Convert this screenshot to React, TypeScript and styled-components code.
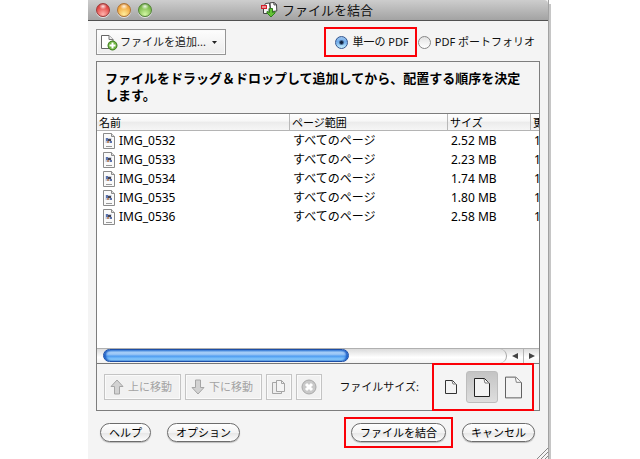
import React, { useState } from "react";
import styled, { createGlobalStyle, css } from "styled-components";

const GlobalStyle = createGlobalStyle`
  * { box-sizing: border-box; }
  body { margin: 0; background: #fff; }
  body, button, input { font-family: "Noto Sans", "Noto Sans CJK JP", sans-serif; }
`;

const Stage = styled.div`
  min-height: 100vh;
  padding: 0 89px 0 88px;
  display: flex;
`;

const Dialog = styled.main`
  position: relative;
  flex: 1;
  min-width: 0;
  display: flex;
  flex-direction: column;
  margin-right: 2px;
  border-right: 1px solid #a2a2a2;
  background: #f4f4f4;
  color: #111;
  font-size: 11px;
  line-height: 16px;
  &::after {
    content: "";
    position: absolute;
    top: 4px;
    bottom: 0;
    right: -3px;
    width: 2px;
    background: #c6c6c6;
  }
`;

const TitleBar = styled.header`
  position: relative;
  display: flex;
  align-items: center;
  justify-content: center;
  height: 21px;
  background: linear-gradient(#cdcdcd, #a3a3a3);
  border-bottom: 1px solid #515151;
  border-top-right-radius: 4px;
`;

const Lights = styled.div`
  position: absolute;
  left: 8px;
  top: 3px;
  display: flex;
  gap: 7px;
`;

const Light = styled.button<{ $top: string; $mid: string; $glow: string }>`
  width: 14px;
  height: 14px;
  padding: 0;
  border: 1px solid ${(p) => p.$top};
  border-radius: 50%;
  background:
    radial-gradient(ellipse 4px 3px at 50% 20%, #fffd, #fff0),
    radial-gradient(circle at 50% 85%, ${(p) => p.$glow}, ${(p) => p.$mid} 70%, ${(p) => p.$top});
  box-shadow: 0 1px 0 #e2e2e2;
`;

const Title = styled.h1`
  display: flex;
  align-items: center;
  gap: 4px;
  margin: 0;
  padding-right: 2px;
  font-size: 13px;
  line-height: 20px;
  font-weight: 400;
`;

const TopRow = styled.div`
  display: flex;
  align-items: center;
  justify-content: space-between;
  padding: 8px 13px 6px 8px;
`;

const SquareButton = styled.button`
  display: flex;
  align-items: center;
  gap: 4px;
  height: 26px;
  padding: 0 8px 0 5px;
  border: 1px solid #959595;
  background: linear-gradient(#fdfdfd, #ececec);
  box-shadow: inset 0 0 0 1px #fafafa;
  color: #222;
  font-size: 11px;
  line-height: 16px;
  white-space: nowrap;
  &:disabled {
    border-color: #c4c4c4;
    background: #f1f1f1;
    color: #a3a3a3;
  }
`;

const AddButton = styled(SquareButton)`
  gap: 2px;
  padding: 0 8px 0 4px;
`;

const AddLabel = styled.span`
  padding-right: 4px;
`;

const IconButton = styled(SquareButton)`
  justify-content: center;
  width: 26px;
  padding: 0;
`;

const highlight = css`
  outline: 2px solid #fb0007;
`;

const RadioGroup = styled.div`
  display: flex;
  gap: 3px;
`;

const RadioLabel = styled.label<{ $marked?: boolean }>`
  display: flex;
  align-items: center;
  gap: 4px;
  height: 26px;
  white-space: nowrap;
  ${(p) => p.$marked && css`padding: 0 6px 0 9px; ${highlight}`}
`;

const Radio = styled.input`
  appearance: none;
  width: 13px;
  height: 13px;
  margin: 0;
  border: 1px solid #868686;
  border-radius: 50%;
  background: linear-gradient(#e2e2e2, #fff);
  &:checked {
    border-color: #33568f;
    background:
      radial-gradient(circle at 50% 50%, #10233f 1px, #10233f00 3px),
      linear-gradient(#9cc4ee, #6fabea 45%, #c8f2ff);
  }
`;

const Panel = styled.section`
  flex: 1;
  display: flex;
  flex-direction: column;
  margin: 0 8px;
  border: 1px solid #7d7d7d;
`;

const Lead = styled.h2`
  margin: 0;
  padding: 8px 8px 9px;
  border-bottom: 1px solid #7d7d7d;
  font-size: 13px;
  line-height: 17px;
  font-weight: 700;
  color: #000;
`;

const TableArea = styled.div`
  flex: 1;
  min-height: 234px;
  overflow: hidden;
  background: #fff;
`;

const FileTable = styled.table`
  width: 560px;
  table-layout: fixed;
  border-collapse: separate;
  border-spacing: 0;
  color: #000;
`;

const Th = styled.th<{ $width?: number }>`
  width: ${(p) => (p.$width ? `${p.$width}px` : "auto")};
  height: 17px;
  padding: 0 2px;
  border-right: 1px solid #b8b8b8;
  border-bottom: 1px solid #b4b4b4;
  background: linear-gradient(#fff, #f7f7f7 45%, #ebebeb 50%, #f6f6f6);
  font-size: 11px;
  line-height: 15px;
  font-weight: 400;
  text-align: left;
`;

const Td = styled.td`
  height: 19px;
  padding: 0 3px;
  font-size: 12px;
  line-height: 19px;
  white-space: nowrap;
`;

const FileName = styled.div`
  display: flex;
  align-items: center;
  gap: 4px;
  padding-left: 3px;
`;

const ScrollBar = styled.div`
  display: flex;
  height: 16px;
  border-top: 1px solid #b0b0b0;
  border-bottom: 1px solid #777;
  background: linear-gradient(#dcdcdc, #fff 60%, #f2f2f2);
`;

const Track = styled.div`
  flex: 1;
  padding-left: 6px;
  border-right: 1px solid #a5a5a5;
  border-radius: 0 8px 8px 0;
`;

const Thumb = styled.div`
  width: 61%;
  height: 13px;
  border: 1px solid #1c4ea6;
  border-radius: 7px;
  background: linear-gradient(#5f9eea, #a9d0f8 25%, #8abdf5 45%, #4d9bf0 55%, #7fc3fb 80%, #a3defd);
  box-shadow: inset 2px 0 2px #1d5fc6, inset -2px 0 2px #1d5fc6;
`;

const ScrollArrow = styled.button`
  display: flex;
  align-items: center;
  justify-content: center;
  width: 16px;
  padding: 0;
  border: 0;
  background: none;
  color: #444;
  & + & { border-left: 1px solid #b5b5b5; }
`;

const ActionBar = styled.div`
  display: flex;
  align-items: center;
  justify-content: space-between;
  height: 46px;
  padding: 0 7px;
`;

const Group = styled.div`
  display: flex;
  align-items: center;
  gap: 4px;
`;

const SizeGroup = styled(Group)`
  gap: 15px;
`;

const SizeChoices = styled.div`
  display: flex;
  align-items: center;
  gap: 6px;
  height: 44px;
  padding: 0 9px 0 7px;
  ${highlight}
`;

const SizeButton = styled.button<{ $selected: boolean; $narrow?: boolean }>`
  display: flex;
  align-items: center;
  justify-content: center;
  width: ${(p) => (p.$narrow ? 19 : 32)}px;
  height: 32px;
  padding: 0;
  border: 1px solid ${(p) => (p.$selected ? "#bdbdbd" : "transparent")};
  border-radius: 3px;
  background: ${(p) => (p.$selected ? "linear-gradient(#c4c4c4, #dedede)" : "none")};
`;

const Footer = styled.footer`
  display: flex;
  align-items: center;
  justify-content: space-between;
  padding: 8px 13px 13px 12px;
`;

const FooterGroup = styled.div<{ $gap: number }>`
  display: flex;
  align-items: center;
  gap: ${(p) => p.$gap}px;
`;

const Marked = styled.div`
  display: flex;
  padding: 4px 5px;
  ${highlight}
`;

const PillButton = styled.button`
  height: 19px;
  padding: 0 8px;
  border: 1px solid #6c6c6c;
  border-radius: 10px;
  background: linear-gradient(#fff, #f3f3f3 50%, #e6e6e6 52%, #fdfdfd);
  box-shadow: 0 1px 1px #bbb;
  color: #000;
  font-size: 11px;
  line-height: 16px;
  white-space: nowrap;
`;

const Grip = styled.svg`
  position: absolute;
  right: 0;
  bottom: 0;
`;

const AppIcon = () => (
  <svg width="17" height="16" viewBox="0 0 17 16" aria-hidden="true">
    <path d="M3.500 3.500l1-2 4-.5 1 8-5 .5z" fill="#fff" stroke="#444" />
    <path d="M9 .8l4-.3 2.500 2 .3 6.500-6 .5z" fill="#fff" stroke="#444" />
    <path d="M12.800.8l.2 2.200 2.500-.3" fill="none" stroke="#444" />
    <path d="M2.500 7v4.500h5.500v-5" fill="#f4f4f4" stroke="#444" />
    <rect x="0" y="3" width="6" height="4" fill="#d3202b" />
    <path d="M1 5h4" stroke="#fff" />
    <path d="M8.500 6.500h3v4l2.500-1v1.500l-4 4-4-4V9.500l2.500 1z" fill="#63c234" stroke="#2f7d1b" />
  </svg>
);

const AddIcon = () => (
  <svg width="17" height="17" viewBox="0 0 17 17" aria-hidden="true">
    <path d="M.5 1.500h7.500l4 4V14.500H.5z" fill="#fff" stroke="#666" />
    <path d="M8 1.500v4h4" fill="#eee" stroke="#777" />
    <circle cx="11.500" cy="11.500" r="4.500" fill="#6fb540" stroke="#3b7b1c" />
    <path d="M11.500 8.500v6M8.500 11.500h6" stroke="#fff" strokeWidth="2" />
  </svg>
);

const JpegIcon = () => (
  <svg width="12" height="16" viewBox="0 0 12 16" aria-hidden="true">
    <path d="M.5.5h8l3 3v12H.5z" fill="#fafafa" stroke="#8b8b8b" />
    <path d="M8.500.5v3h3" fill="#ddd" stroke="#8b8b8b" />
    <path d="M2.500 5h6v5h-6z" fill="#bcc6da" />
    <path d="M3 5h2v3H3zM7 8h2v2H7z" fill="#5a72ad" />
    <path d="M5 6h3v2H5z" fill="#47434b" />
    <path d="M4 8h2v2H4z" fill="#bd8b6b" />
    <path d="M3 13.500h6" stroke="#999" />
  </svg>
);

const ArrowIcon = ({ down }: { down?: boolean }) => (
  <svg width="14" height="16" viewBox="0 0 14 16" aria-hidden="true">
    <path
      d={down ? "M4.500 1h5v7.500H13L7 15 1 8.500h3.500z" : "M7 1l6 6.500H9.500V15h-5V7.500H1z"}
      fill="#d2d2d2"
      stroke="#a5a5a5"
      strokeLinejoin="round"
    />
  </svg>
);

const CopyIcon = () => (
  <svg width="16" height="16" viewBox="0 0 16 16" aria-hidden="true">
    <path d="M5 3.500H1.500v11h9V12" fill="#eee" stroke="#a5a5a5" />
    <path d="M5.500 1.500h5l3 3v8h-8z" fill="#f4f4f4" stroke="#a5a5a5" />
    <path d="M10.500 1.500v3h3" fill="none" stroke="#a5a5a5" />
  </svg>
);

const RemoveIcon = () => (
  <svg width="16" height="16" viewBox="0 0 16 16" aria-hidden="true">
    <circle cx="8" cy="8" r="7" fill="#c9c9c9" stroke="#a9a9a9" />
    <path d="M5 5l6 6M11 5l-6 6" stroke="#fff" strokeWidth="3" />
  </svg>
);

const PageIcon = ({ w, h, fold, color }: { w: number; h: number; fold: number; color: string }) => (
  <svg width={w} height={h} viewBox={`0 0 ${w} ${h}`} aria-hidden="true">
    <path
      d={`M.5 .5H${w - fold - 0.5}L${w - 0.5} ${fold + 0.5}V${h - 0.5}H.5z`}
      fill="#f3f3f3"
      stroke={color}
    />
    <path d={`M${w - fold - 1} 1L${w - fold} ${fold}H${w - 1}`} fill="#fff" stroke="#777" />
  </svg>
);

const Triangle = ({ d, w, h }: { d: string; w: number; h: number }) => (
  <svg width={w} height={h} viewBox={`0 0 ${w} ${h}`} aria-hidden="true">
    <path d={d} fill="currentColor" />
  </svg>
);

const files = [
  { name: "IMG_0532", size: "2.52 MB" },
  { name: "IMG_0533", size: "2.23 MB" },
  { name: "IMG_0534", size: "1.74 MB" },
  { name: "IMG_0535", size: "1.80 MB" },
  { name: "IMG_0536", size: "2.58 MB" },
];

const sizes = [
  { label: "小", w: 12, h: 14, fold: 4, color: "#333" },
  { label: "中", w: 16, h: 19, fold: 5, color: "#222" },
  { label: "大", w: 18, h: 23, fold: 6, color: "#555" },
];

export default function App() {
  const [kind, setKind] = useState("single");
  const [size, setSize] = useState(1);

  return (
    <>
      <GlobalStyle />
      <Stage>
        <Dialog>
          <TitleBar>
            <Lights>
              <Light aria-label="閉じる" $top="#a03a3a" $mid="#e0413f" $glow="#ffb3ac" />
              <Light aria-label="しまう" $top="#b07434" $mid="#f0a138" $glow="#ffee9c" />
              <Light aria-label="拡大" $top="#538438" $mid="#76b545" $glow="#d3f7a4" />
            </Lights>
            <Title>
              <AppIcon />
              ファイルを結合
            </Title>
          </TitleBar>

          <TopRow>
            <AddButton>
              <AddIcon />
              <AddLabel>ファイルを追加...</AddLabel>
              <Triangle d="M0 0h5L2.500 3z" w={5} h={3} />
            </AddButton>
            <RadioGroup role="radiogroup">
              <RadioLabel $marked>
                <Radio type="radio" name="kind" checked={kind === "single"} onChange={() => setKind("single")} />
                単一の PDF
              </RadioLabel>
              <RadioLabel>
                <Radio type="radio" name="kind" checked={kind === "portfolio"} onChange={() => setKind("portfolio")} />
                PDF ポートフォリオ
              </RadioLabel>
            </RadioGroup>
          </TopRow>

          <Panel>
            <Lead>ファイルをドラッグ＆ドロップして追加してから、配置する順序を決定します。</Lead>
            <TableArea>
              <FileTable>
                <thead>
                  <tr>
                    <Th $width={193}>名前</Th>
                    <Th $width={158}>ページ範囲</Th>
                    <Th $width={83}>サイズ</Th>
                    <Th>更</Th>
                  </tr>
                </thead>
                <tbody>
                  {files.map((f) => (
                    <tr key={f.name}>
                      <Td>
                        <FileName>
                          <JpegIcon />
                          {f.name}
                        </FileName>
                      </Td>
                      <Td>すべてのページ</Td>
                      <Td>{f.size}</Td>
                      <Td>1</Td>
                    </tr>
                  ))}
                </tbody>
              </FileTable>
            </TableArea>
            <ScrollBar>
              <Track>
                <Thumb />
              </Track>
              <ScrollArrow aria-label="左へ">
                <Triangle d="M6 0v6L0 3z" w={6} h={6} />
              </ScrollArrow>
              <ScrollArrow aria-label="右へ">
                <Triangle d="M0 0v6l6-3z" w={6} h={6} />
              </ScrollArrow>
            </ScrollBar>
            <ActionBar>
              <Group>
                <SquareButton disabled>
                  <ArrowIcon />
                  上に移動
                </SquareButton>
                <SquareButton disabled>
                  <ArrowIcon down />
                  下に移動
                </SquareButton>
                <IconButton disabled aria-label="ページを選択">
                  <CopyIcon />
                </IconButton>
                <IconButton disabled aria-label="削除">
                  <RemoveIcon />
                </IconButton>
              </Group>
              <SizeGroup>
                <span>ファイルサイズ:</span>
                <SizeChoices>
                  {sizes.map((s, i) => (
                    <SizeButton
                      key={s.label}
                      aria-label={s.label}
                      aria-pressed={size === i}
                      $selected={size === i}
                      $narrow={i !== 1}
                      onClick={() => setSize(i)}
                    >
                      <PageIcon w={s.w} h={s.h} fold={s.fold} color={s.color} />
                    </SizeButton>
                  ))}
                </SizeChoices>
              </SizeGroup>
            </ActionBar>
          </Panel>

          <Footer>
            <FooterGroup $gap={16}>
              <PillButton>ヘルプ</PillButton>
              <PillButton>オプション</PillButton>
            </FooterGroup>
            <FooterGroup $gap={11}>
              <Marked>
                <PillButton>ファイルを結合</PillButton>
              </Marked>
              <PillButton>キャンセル</PillButton>
            </FooterGroup>
          </Footer>
          <Grip width="12" height="12" viewBox="0 0 12 12" aria-hidden="true">
            <path d="M1 12L12 1M5 12l7-7M9 12l3-3" stroke="#888" />
          </Grip>
        </Dialog>
      </Stage>
    </>
  );
}
